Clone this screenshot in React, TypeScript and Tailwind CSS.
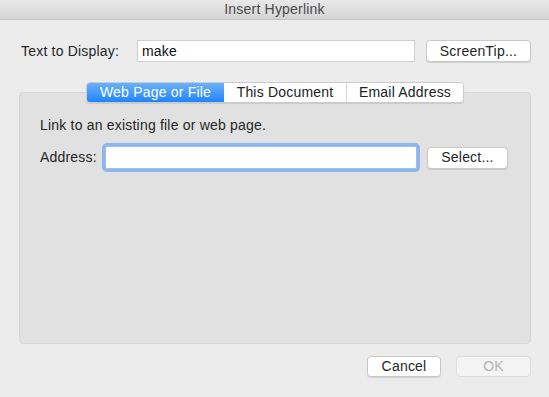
import React from "react";

export default function App() {
  const btn =
    "flex items-center justify-center bg-white rounded-[4px] border border-[#c9c9c9] shadow-[0_1px_1px_rgba(0,0,0,0.12)] text-[14px] text-[#262626]";
  return (
    <div
      className="w-[549px] h-[397px] bg-[#ececec] flex flex-col overflow-hidden tracking-[0.2px]"
      style={{ fontFamily: '"Liberation Sans", Arial, sans-serif' }}
    >
      {/* Title bar */}
      <div className="h-[20px] shrink-0 flex items-center justify-center bg-gradient-to-b from-[#e9e9e9] to-[#d4d4d4] border-b border-[#c3c3c3] text-[14px] text-[#4a4a4a]">
        Insert Hyperlink
      </div>

      {/* Text to display row */}
      <div className="mt-[20px] h-[22px] flex items-center">
        <span className="ml-[21px] w-[116px] text-[14px] text-[#262626]">Text to Display:</span>
        <div className="w-[278px] h-[22px] bg-white border border-[#cfcfcf] flex items-center pl-[4px] text-[14px] text-[#111]">
          make
        </div>
        <div className={`${btn} ml-[11px] w-[105px] h-[22px]`}>ScreenTip...</div>
      </div>

      {/* Panel */}
      <div className="mt-[30px] ml-[19px] w-[512px] h-[252px] bg-[#e1e1e1] border border-[#d8d8d8] rounded-[4px] flex flex-col">
        <div className="-mt-[11px] h-[21px] flex justify-center">
          <div className="flex rounded-[4px] overflow-hidden border border-[#cbcbcb] shadow-[0_1px_1px_rgba(0,0,0,0.1)] text-[14px]">
            <div className="w-[137px] flex items-center justify-center bg-gradient-to-b from-[#69b1fa] to-[#1c84fb] text-white">
              Web Page or File
            </div>
            <div className="w-[123px] flex items-center justify-center bg-white text-[#222] border-r border-[#d6d6d6]">
              This Document
            </div>
            <div className="w-[116px] flex items-center justify-center bg-white text-[#222]">
              Email Address
            </div>
          </div>
        </div>
        <div className="mt-[14px] ml-[20px] text-[14px] text-[#262626] leading-[16px]">
          Link to an existing file or web page.
        </div>
        <div className="mt-[10px] flex items-center h-[29px]">
          <span className="ml-[20px] w-[65px] text-[14px] text-[#262626]">Address:</span>
          <div className="w-[312px] h-[23px] bg-white border border-[#9fbde8] ring-[3px] ring-[#8db5ee] rounded-[2px]" />
          <div className={`${btn} ml-[10px] w-[81px] h-[22px]`}>Select...</div>
        </div>
      </div>

      {/* Bottom buttons */}
      <div className="mt-[12px] flex">
        <div className={`${btn} ml-[367px] w-[74px] h-[21px]`}>Cancel</div>
        <div className="ml-[15px] w-[75px] h-[21px] flex items-center justify-center rounded-[4px] bg-[#f3f3f3] border border-[#dedede] text-[14px] text-[#b5b5b5]">
          OK
        </div>
      </div>
    </div>
  );
}
